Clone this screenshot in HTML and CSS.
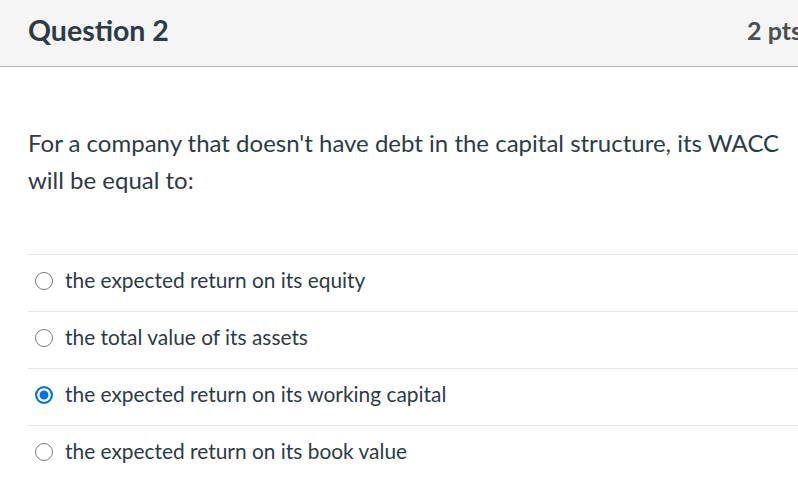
FILE: index.html
```html
<!DOCTYPE html>
<html>
<head>
<meta charset="utf-8">
<link rel="stylesheet" href="styles.css">
</head>
<body>
<div class="question">
  <div class="header">
    <h2 class="title">Question 2</h2>
    <span class="points">2 pts</span>
  </div>
  <div class="content">
    <p class="text">For a company that doesn't have debt in the capital structure, its WACC will be equal to:</p>
    <div class="answers">
      <label class="answer"><span class="radio"></span><span class="label">the expected return on its equity</span></label>
      <label class="answer"><span class="radio"></span><span class="label">the total value of its assets</span></label>
      <label class="answer"><span class="radio checked"></span><span class="label">the expected return on its working capital</span></label>
      <label class="answer"><span class="radio"></span><span class="label">the expected return on its book value</span></label>
    </div>
  </div>
</div>
</body>
</html>
```

FILE: styles.css
```css
html, body {
  margin: 0;
  padding: 0;
  background: #fff;
  overflow: hidden;
}
body {
  font-family: Lato, "Open Sans", sans-serif;
  color: #2d3b45;
}
.question {
  width: 830px;
}
.header {
  display: flex;
  justify-content: space-between;
  align-items: center;
  height: 66px;
  background: #f5f5f5;
  border-bottom: 1px solid #b4b4b4;
  padding: 0 28px 0 28px;
}
.title {
  margin: 0;
  font-size: 28.5px;
  font-weight: 700;
  color: #2d3b45;
  padding-bottom: 7px;
}
.points {
  font-size: 25px;
  font-weight: 700;
  color: #4a4d52;
  padding-bottom: 7px;
}
.content {
  padding: 0 0 0 28px;
}
.text {
  margin: 0;
  padding: 57px 0 0 0;
  width: 765px;
  font-size: 24px;
  line-height: 37px;
  height: 130px;
}
.answers {
  display: flex;
  flex-direction: column;
}
.answer {
  display: flex;
  align-items: center;
  padding-bottom: 8px;
  box-sizing: border-box;
  height: 57px;
  border-top: 1px solid #e2e4e6;
}
.radio {
  flex: none;
  width: 18px;
  height: 18px;
  border: 1.5px solid #7b7b7b;
  border-radius: 50%;
  margin-left: 7px;
  margin-right: 12px;
  box-sizing: border-box;
  position: relative;
  top: 2px;
}
.radio.checked {
  border: 2px solid #0770e3;
  background: #0770e3;
  box-shadow: inset 0 0 0 2.5px #fff;
}
.label {
  font-size: 20.9px;
}
```
